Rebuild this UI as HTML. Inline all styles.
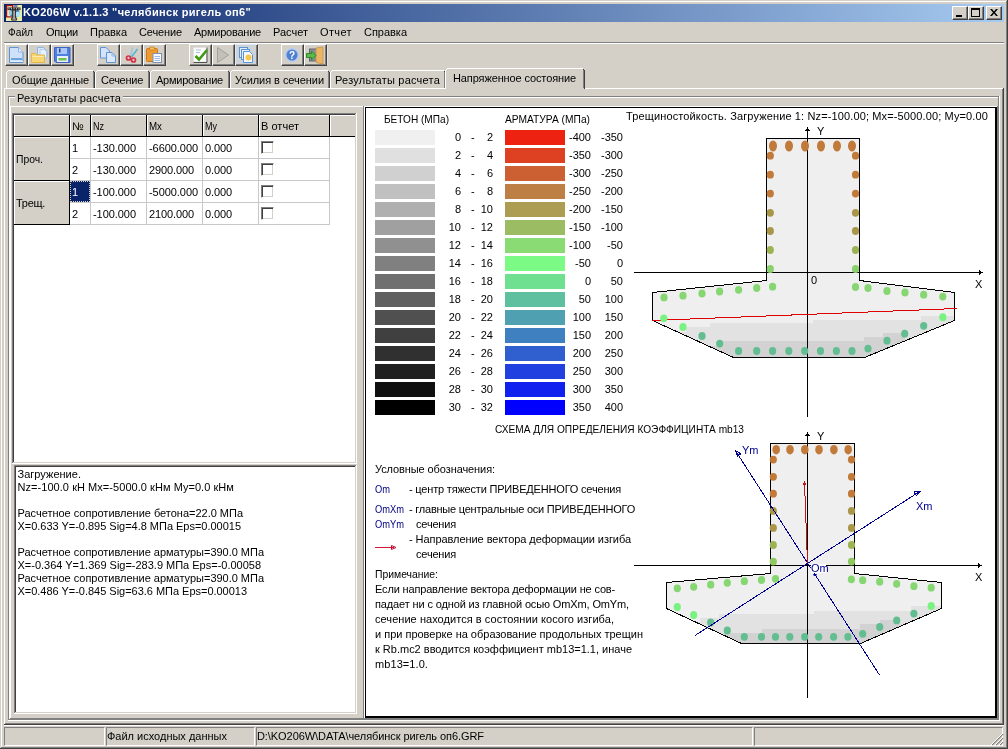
<!DOCTYPE html>
<html lang="ru"><head><meta charset="utf-8"><title>KO206W</title><style>
html,body{margin:0;padding:0}
body{width:1008px;height:749px;background:#D4D0C8;position:relative;overflow:hidden;will-change:transform;font-family:"Liberation Sans",sans-serif;font-size:11px;color:#000;line-height:13px}
.a{position:absolute}
.t{position:absolute;white-space:pre;line-height:13px;height:13px}
.h{position:absolute;height:1px}
.v{position:absolute;width:1px}
.btn{position:absolute;width:23px;height:22px;box-sizing:border-box;border:1px solid;border-color:#fff #404040 #404040 #fff;box-shadow:inset -1px -1px 0 #808080;background:#D4D0C8}
.cap{position:absolute;width:16px;height:14px;box-sizing:border-box;border:1px solid;border-color:#fff #404040 #404040 #fff;box-shadow:inset -1px -1px 0 #808080, inset 1px 1px 0 #D4D0C8;background:#D4D0C8}
.sb{position:absolute;top:727px;height:19px;box-sizing:border-box;border:1px solid;border-color:#808080 #fff #fff #808080}
.cb{position:absolute;width:13px;height:13px;box-sizing:border-box;border:1px solid;border-color:#808080 #fff #fff #808080;box-shadow:inset 1px 1px 0 #404040, inset -1px -1px 0 #D4D0C8;background:#fff}
</style></head><body>
<div class="a" style="left:0px;top:0px;width:1008px;height:749px;background:#D4D0C8;"></div>
<div class="h" style="left:0px;top:0px;width:1008px;background:#D4D0C8"></div>
<div class="v" style="left:0px;top:0px;height:749px;background:#D4D0C8"></div>
<div class="h" style="left:1px;top:1px;width:1006px;background:#fff"></div>
<div class="v" style="left:1px;top:1px;height:747px;background:#fff"></div>
<div class="h" style="left:0px;top:748px;width:1008px;background:#404040"></div>
<div class="v" style="left:1007px;top:0px;height:749px;background:#404040"></div>
<div class="h" style="left:1px;top:747px;width:1006px;background:#808080"></div>
<div class="v" style="left:1006px;top:1px;height:747px;background:#808080"></div>
<div class="a" style="left:4px;top:4px;width:1000px;height:18px;background:linear-gradient(90deg,#0A246A 0%,#A6CAF0 100%);"></div>
<svg class="a" style="left:6px;top:5px" width="16" height="16" viewBox="0 0 16 16"><rect width="16" height="16" fill="#E8EEA8"/><rect x=".6" y=".6" width="6" height="11.300" fill="#F4E2BC" stroke="#A01010" stroke-width="1.200"/><rect x="7.500" y="0" width="4" height="2.500" fill="#5A4AA8" opacity=".7"/><ellipse cx="8.500" cy="8" rx="5.200" ry="4.600" fill="#3C74BC"/><ellipse cx="11.800" cy="9.300" rx="2.300" ry="2.700" fill="#A8E6F6"/><ellipse cx="4.600" cy="8" rx="1.300" ry="2.400" fill="#90D8E4"/><rect x="1.500" y="2.500" width="13" height="2.600" fill="#2A2A2A"/><path d="M2.500 3.800h11" stroke="#fff" stroke-width=".9" stroke-dasharray="1 1.500"/><path d="M6.800 5h2.600v8.200h1.200v1.900h-5v-1.900h1.200z" fill="#B4B4B4" stroke="#2A1C10" stroke-width=".9"/></svg>
<span class="t" id="t0" style="left:23px;top:6px;color:#fff;font-weight:bold;letter-spacing:0.328px;">KO206W v.1.1.3 "челябинск ригель оп6"</span>
<div class="cap" style="left:952px;top:6px"></div>
<div class="cap" style="left:968px;top:6px"></div>
<div class="cap" style="left:986px;top:6px"></div>
<div class="a" style="left:956px;top:15px;width:6px;height:2px;background:#000;"></div>
<div class="a" style="left:971px;top:8px;width:9px;height:9px;box-sizing:border-box;border:1px solid #000;border-top-width:2px"></div>
<svg class="a" style="left:990px;top:9px" width="8" height="7" viewBox="0 0 8 7"><path d="M0 0h2l2 2.5L6 0h2L5 3.5 8 7H6L4 4.5 2 7H0l3-3.5z" fill="#000"/></svg>
<span class="t" id="t1" style="left:8px;top:26px;transform:scaleX(0.9243);transform-origin:0 0;">Файл</span>
<span class="t" id="t2" style="left:46px;top:26px;letter-spacing:-0.222px;">Опции</span>
<span class="t" id="t3" style="left:90px;top:26px;letter-spacing:-0.029px;">Правка</span>
<span class="t" id="t4" style="left:139px;top:26px;letter-spacing:-0.127px;">Сечение</span>
<span class="t" id="t5" style="left:194px;top:26px;letter-spacing:-0.234px;">Армирование</span>
<span class="t" id="t6" style="left:273px;top:26px;letter-spacing:0.0px;">Расчет</span>
<span class="t" id="t7" style="left:320px;top:26px;letter-spacing:0.375px;">Отчет</span>
<span class="t" id="t8" style="left:364px;top:26px;letter-spacing:-0.022px;">Справка</span>
<div class="h" style="left:4px;top:42px;width:1000px;background:#808080"></div>
<div class="h" style="left:4px;top:43px;width:1000px;background:#fff"></div>
<div class="btn" style="left:5px;top:44px"></div>
<div class="btn" style="left:28px;top:44px"></div>
<div class="btn" style="left:51px;top:44px"></div>
<div class="btn" style="left:97px;top:44px"></div>
<div class="btn" style="left:120px;top:44px"></div>
<div class="btn" style="left:143px;top:44px"></div>
<div class="btn" style="left:189px;top:44px"></div>
<div class="btn" style="left:212px;top:44px"></div>
<div class="btn" style="left:235px;top:44px"></div>
<div class="btn" style="left:281px;top:44px"></div>
<div class="btn" style="left:304px;top:44px"></div>
<svg class="a" style="left:5px;top:44px" width="23" height="22" viewBox="0 0 23 22"><path d="M4.5 3.5h9l4.5 4.5v10.500h-13.500z" fill="#CFE0FA" stroke="#5C95D6"/><path d="M13.500 3.500v4.500h4.500" fill="#E8F0FF" stroke="#8FB5E6"/><rect x="6" y="14" width="11" height="2" fill="#6FA3DC"/><rect x="5" y="17" width="13" height="1" fill="#E6F0FF"/></svg>
<svg class="a" style="left:28px;top:44px" width="23" height="22" viewBox="0 0 23 22"><path d="M9.500 3.500h6l3.500 3.500v7h-9.500z" fill="#DCE8FC" stroke="#8FB5E6"/><path d="M12 5.500h4.500l2 2v6.500h-6.500z" fill="#E8F0FF" stroke="#A8C4EC" stroke-width=".8"/><path d="M3.500 9.500h4l1 1.500h8v7.500h-13z" fill="#F7D774" stroke="#E2B84A"/><path d="M4.500 12.500h11" stroke="#FCEBAA"/></svg>
<svg class="a" style="left:51px;top:44px" width="23" height="22" viewBox="0 0 23 22"><path d="M3.500 3.500h15.500v15h-14l-1.500-1.500z" fill="#4F7FE0" stroke="#3C62C4"/><rect x="6" y="4" width="10" height="6" fill="#A9C6F4"/><rect x="8" y="4.500" width="1.500" height="4" fill="#28408C"/><rect x="6" y="12" width="11" height="6" fill="#E8F0FF"/><rect x="7.500" y="14" width="8" height="2.500" fill="#6CC24A"/></svg>
<svg class="a" style="left:97px;top:44px" width="23" height="22" viewBox="0 0 23 22"><path d="M3.500 3.500h5.500l3.500 3.500v7h-9z" fill="#D4E3FB" stroke="#5C95D6"/><path d="M9.500 8.500h5.500l3.500 3.500v6.500h-9z" fill="#DCE8FC" stroke="#5C95D6"/><path d="M15 8.500v3.500h3.500" fill="none" stroke="#8FB5E6"/></svg>
<svg class="a" style="left:120px;top:44px" width="23" height="22" viewBox="0 0 23 22"><path d="M12.500 3.500L10.500 13" stroke="#9CC8DC" stroke-width="1.600"/><path d="M17.500 5L11.500 13" stroke="#58B4D0" stroke-width="1.600"/><circle cx="8.500" cy="14" r="2" fill="none" stroke="#D83048" stroke-width="1.700"/><circle cx="13.500" cy="16" r="2" fill="none" stroke="#D83048" stroke-width="1.700"/></svg>
<svg class="a" style="left:143px;top:44px" width="23" height="22" viewBox="0 0 23 22"><rect x="3.500" y="4.500" width="11" height="13" rx="1" fill="#EE9A34" stroke="#C87818"/><rect x="6.500" y="3" width="5" height="3" rx="1" fill="#F8C060" stroke="#C87818" stroke-width=".8"/><rect x="10" y="9.500" width="8.500" height="9" fill="#F8FAFF" stroke="#8090A8"/><path d="M11.500 12.500h5.500M11.500 14.500h5.500M11.500 16.500h5.500" stroke="#8FB2E6" stroke-width=".9"/></svg>
<svg class="a" style="left:189px;top:44px" width="23" height="22" viewBox="0 0 23 22"><rect x="4.500" y="3.500" width="13" height="14.500" fill="#FDFDFD" stroke="#E0E0E0"/><path d="M4.500 18.500h13.500v-15" fill="none" stroke="#505050"/><path d="M7 6h5M7 8.500h4" stroke="#8FB0E0" stroke-width=".8"/><path d="M6.500 12l3.500 3.500l8-9.500" fill="none" stroke="#3F9A12" stroke-width="2.600"/></svg>
<svg class="a" style="left:212px;top:44px" width="23" height="22" viewBox="0 0 23 22"><path d="M5.500 3.500v15l11-7.500z" fill="#C2C0BA" stroke="#A4A29C"/></svg>
<svg class="a" style="left:235px;top:44px" width="23" height="22" viewBox="0 0 23 22"><rect x="0" y="0" width="21" height="20" fill="#C9D6E6" opacity=".55"/><rect x="4.500" y="3.500" width="8" height="10" fill="#E4EEFC" stroke="#5C95D6"/><rect x="6.500" y="5.500" width="8" height="10" fill="#E4EEFC" stroke="#5C95D6"/><path d="M8.500 7.500h6l3 3v8h-9z" fill="#F4F8FF" stroke="#5C95D6"/><circle cx="13.500" cy="13.500" r="3" fill="#F6C84A"/></svg>
<svg class="a" style="left:281px;top:44px" width="23" height="22" viewBox="0 0 23 22"><circle cx="11" cy="11" r="6.300" fill="#4F80D0" stroke="#B4CCF2" stroke-width="1.600"/><text x="11" y="14.800" text-anchor="middle" font-family="Liberation Sans, sans-serif" font-weight="bold" font-size="10" fill="#fff">?</text></svg>
<svg class="a" style="left:304px;top:44px" width="23" height="22" viewBox="0 0 23 22"><rect x="5.500" y="5" width="7" height="12" fill="#8C9098" stroke="#60646C"/><path d="M12 4l7-1v17l-7-1.500z" fill="#EBB567" stroke="#C89040" stroke-width=".8"/><path d="M2.500 9.500h5v-2.500l4.500 4.500l-4.500 4.500v-2.500h-5z" fill="#5CB84A" stroke="#2F8A24"/></svg>
<div class="v" style="left:74px;top:45px;height:20px;background:#E6E3DE"></div>
<div class="v" style="left:166px;top:45px;height:20px;background:#E6E3DE"></div>
<div class="v" style="left:258px;top:45px;height:20px;background:#E6E3DE"></div>
<div class="v" style="left:327px;top:45px;height:20px;background:#E6E3DE"></div>
<div class="h" style="left:8px;top:70px;width:85px;background:#fff"></div>
<div class="v" style="left:6px;top:72px;height:16px;background:#fff"></div>
<div class="a" style="left:7px;top:71px;width:1px;height:1px;background:#fff;"></div>
<div class="v" style="left:93px;top:72px;height:16px;background:#808080"></div>
<div class="v" style="left:94px;top:72px;height:16px;background:#404040"></div>
<div class="a" style="left:93px;top:71px;width:1px;height:1px;background:#404040;"></div>
<span class="t" id="t9" style="left:12px;top:74px;letter-spacing:-0.078px;">Общие данные</span>
<div class="h" style="left:97px;top:70px;width:51px;background:#fff"></div>
<div class="v" style="left:95px;top:72px;height:16px;background:#fff"></div>
<div class="a" style="left:96px;top:71px;width:1px;height:1px;background:#fff;"></div>
<div class="v" style="left:148px;top:72px;height:16px;background:#808080"></div>
<div class="v" style="left:149px;top:72px;height:16px;background:#404040"></div>
<div class="a" style="left:148px;top:71px;width:1px;height:1px;background:#404040;"></div>
<span class="t" id="t10" style="left:101px;top:74px;letter-spacing:-0.27px;">Сечение</span>
<div class="h" style="left:152px;top:70px;width:76px;background:#fff"></div>
<div class="v" style="left:150px;top:72px;height:16px;background:#fff"></div>
<div class="a" style="left:151px;top:71px;width:1px;height:1px;background:#fff;"></div>
<div class="v" style="left:228px;top:72px;height:16px;background:#808080"></div>
<div class="v" style="left:229px;top:72px;height:16px;background:#404040"></div>
<div class="a" style="left:228px;top:71px;width:1px;height:1px;background:#404040;"></div>
<span class="t" id="t11" style="left:156px;top:74px;letter-spacing:-0.234px;">Армирование</span>
<div class="h" style="left:232px;top:70px;width:96px;background:#fff"></div>
<div class="v" style="left:230px;top:72px;height:16px;background:#fff"></div>
<div class="a" style="left:231px;top:71px;width:1px;height:1px;background:#fff;"></div>
<div class="v" style="left:328px;top:72px;height:16px;background:#808080"></div>
<div class="v" style="left:329px;top:72px;height:16px;background:#404040"></div>
<div class="a" style="left:328px;top:71px;width:1px;height:1px;background:#404040;"></div>
<span class="t" id="t12" style="left:235px;top:74px;letter-spacing:-0.053px;">Усилия в сечении</span>
<div class="h" style="left:332px;top:70px;width:112px;background:#fff"></div>
<div class="v" style="left:330px;top:72px;height:16px;background:#fff"></div>
<div class="a" style="left:331px;top:71px;width:1px;height:1px;background:#fff;"></div>
<div class="v" style="left:444px;top:72px;height:16px;background:#808080"></div>
<div class="v" style="left:445px;top:72px;height:16px;background:#404040"></div>
<div class="a" style="left:444px;top:71px;width:1px;height:1px;background:#404040;"></div>
<span class="t" id="t13" style="left:335px;top:74px;letter-spacing:0.215px;">Результаты расчета</span>
<div class="h" style="left:4px;top:88px;width:1000px;background:#fff"></div>
<div class="v" style="left:4px;top:88px;height:636px;background:#fff"></div>
<div class="v" style="left:1003px;top:88px;height:637px;background:#404040"></div>
<div class="v" style="left:1002px;top:89px;height:635px;background:#808080"></div>
<div class="h" style="left:4px;top:724px;width:1000px;background:#404040"></div>
<div class="h" style="left:5px;top:723px;width:998px;background:#808080"></div>
<div class="h" style="left:4px;top:725px;width:1000px;background:#fff"></div>
<div class="a" style="left:445px;top:68px;width:140px;height:21px;background:#D4D0C8;"></div>
<div class="h" style="left:447px;top:68px;width:136px;background:#fff"></div>
<div class="v" style="left:445px;top:70px;height:19px;background:#fff"></div>
<div class="a" style="left:446px;top:69px;width:1px;height:1px;background:#fff;"></div>
<div class="v" style="left:583px;top:70px;height:18px;background:#808080"></div>
<div class="v" style="left:584px;top:70px;height:19px;background:#404040"></div>
<div class="a" style="left:583px;top:69px;width:1px;height:1px;background:#404040;"></div>
<span class="t" id="t14" style="left:453px;top:72px;letter-spacing:-0.117px;">Напряженное состояние</span>
<div class="h" style="left:8px;top:96px;width:991px;background:#808080"></div>
<div class="h" style="left:9px;top:97px;width:989px;background:#fff"></div>
<div class="v" style="left:8px;top:96px;height:624px;background:#808080"></div>
<div class="v" style="left:9px;top:97px;height:623px;background:#fff"></div>
<div class="v" style="left:998px;top:96px;height:624px;background:#808080"></div>
<div class="v" style="left:999px;top:96px;height:625px;background:#fff"></div>
<div class="h" style="left:8px;top:719px;width:991px;background:#808080"></div>
<div class="h" style="left:8px;top:720px;width:992px;background:#fff"></div>
<div class="a" style="left:15px;top:92px;width:108px;height:13px;background:#D4D0C8;"></div>
<span class="t" id="t15" style="left:17px;top:92px;letter-spacing:0.16px;">Результаты расчета</span>
<div class="h" style="left:10px;top:106px;width:353px;background:#fff"></div>
<div class="v" style="left:10px;top:106px;height:612px;background:#fff"></div>
<div class="v" style="left:363px;top:106px;height:613px;background:#808080"></div>
<div class="h" style="left:10px;top:718px;width:354px;background:#808080"></div>
<div class="a" style="left:14px;top:115px;width:341px;height:347px;background:#fff;"></div>
<div class="h" style="left:12px;top:113px;width:345px;background:#808080"></div>
<div class="v" style="left:12px;top:113px;height:351px;background:#808080"></div>
<div class="h" style="left:13px;top:114px;width:343px;background:#404040"></div>
<div class="v" style="left:13px;top:114px;height:349px;background:#404040"></div>
<div class="h" style="left:13px;top:462px;width:343px;background:#D4D0C8"></div>
<div class="v" style="left:355px;top:114px;height:349px;background:#D4D0C8"></div>
<div class="h" style="left:12px;top:463px;width:345px;background:#fff"></div>
<div class="v" style="left:356px;top:113px;height:351px;background:#fff"></div>
<div class="a" style="left:14px;top:115px;width:55px;height:21px;background:#D4D0C8;"></div>
<div class="h" style="left:14px;top:115px;width:55px;background:#fff"></div>
<div class="v" style="left:14px;top:115px;height:21px;background:#fff"></div>
<div class="h" style="left:14px;top:136px;width:56px;background:#000"></div>
<div class="v" style="left:69px;top:115px;height:22px;background:#000"></div>
<div class="a" style="left:70px;top:115px;width:20px;height:21px;background:#D4D0C8;"></div>
<div class="h" style="left:70px;top:115px;width:20px;background:#fff"></div>
<div class="v" style="left:70px;top:115px;height:21px;background:#fff"></div>
<div class="h" style="left:70px;top:136px;width:21px;background:#000"></div>
<div class="v" style="left:90px;top:115px;height:22px;background:#000"></div>
<div class="a" style="left:91px;top:115px;width:55px;height:21px;background:#D4D0C8;"></div>
<div class="h" style="left:91px;top:115px;width:55px;background:#fff"></div>
<div class="v" style="left:91px;top:115px;height:21px;background:#fff"></div>
<div class="h" style="left:91px;top:136px;width:56px;background:#000"></div>
<div class="v" style="left:146px;top:115px;height:22px;background:#000"></div>
<div class="a" style="left:147px;top:115px;width:55px;height:21px;background:#D4D0C8;"></div>
<div class="h" style="left:147px;top:115px;width:55px;background:#fff"></div>
<div class="v" style="left:147px;top:115px;height:21px;background:#fff"></div>
<div class="h" style="left:147px;top:136px;width:56px;background:#000"></div>
<div class="v" style="left:202px;top:115px;height:22px;background:#000"></div>
<div class="a" style="left:203px;top:115px;width:55px;height:21px;background:#D4D0C8;"></div>
<div class="h" style="left:203px;top:115px;width:55px;background:#fff"></div>
<div class="v" style="left:203px;top:115px;height:21px;background:#fff"></div>
<div class="h" style="left:203px;top:136px;width:56px;background:#000"></div>
<div class="v" style="left:258px;top:115px;height:22px;background:#000"></div>
<div class="a" style="left:259px;top:115px;width:70px;height:21px;background:#D4D0C8;"></div>
<div class="h" style="left:259px;top:115px;width:70px;background:#fff"></div>
<div class="v" style="left:259px;top:115px;height:21px;background:#fff"></div>
<div class="h" style="left:259px;top:136px;width:71px;background:#000"></div>
<div class="v" style="left:329px;top:115px;height:22px;background:#000"></div>
<div class="a" style="left:330px;top:115px;width:25px;height:21px;background:#D4D0C8;"></div>
<div class="h" style="left:330px;top:115px;width:25px;background:#fff"></div>
<div class="v" style="left:330px;top:115px;height:21px;background:#fff"></div>
<div class="h" style="left:330px;top:136px;width:26px;background:#000"></div>
<div class="v" style="left:355px;top:115px;height:22px;background:#000"></div>
<div class="v" style="left:355px;top:115px;height:22px;background:#D4D0C8"></div>
<div class="a" style="left:14px;top:137px;width:55px;height:43px;background:#D4D0C8;"></div>
<div class="h" style="left:14px;top:137px;width:55px;background:#fff"></div>
<div class="v" style="left:14px;top:137px;height:43px;background:#fff"></div>
<div class="h" style="left:14px;top:180px;width:56px;background:#000"></div>
<div class="v" style="left:69px;top:137px;height:44px;background:#000"></div>
<div class="a" style="left:14px;top:181px;width:55px;height:43px;background:#D4D0C8;"></div>
<div class="h" style="left:14px;top:181px;width:55px;background:#fff"></div>
<div class="v" style="left:14px;top:181px;height:43px;background:#fff"></div>
<div class="h" style="left:14px;top:224px;width:56px;background:#000"></div>
<div class="v" style="left:69px;top:181px;height:44px;background:#000"></div>
<div class="h" style="left:70px;top:158px;width:260px;background:#C8C8C8"></div>
<div class="h" style="left:70px;top:180px;width:260px;background:#C8C8C8"></div>
<div class="h" style="left:70px;top:202px;width:260px;background:#C8C8C8"></div>
<div class="h" style="left:70px;top:224px;width:260px;background:#C8C8C8"></div>
<div class="v" style="left:90px;top:137px;height:88px;background:#C8C8C8"></div>
<div class="v" style="left:146px;top:137px;height:88px;background:#C8C8C8"></div>
<div class="v" style="left:202px;top:137px;height:88px;background:#C8C8C8"></div>
<div class="v" style="left:258px;top:137px;height:88px;background:#C8C8C8"></div>
<div class="v" style="left:329px;top:137px;height:88px;background:#C8C8C8"></div>
<span class="t" id="t16" style="left:72px;top:120px;letter-spacing:0.188px;">№</span>
<span class="t" id="t17" style="left:93px;top:120px;transform:scaleX(0.8177);transform-origin:0 0;">Nz</span>
<span class="t" id="t18" style="left:149px;top:120px;transform:scaleX(0.886);transform-origin:0 0;">Mx</span>
<span class="t" id="t19" style="left:205px;top:120px;transform:scaleX(0.8179);transform-origin:0 0;">My</span>
<span class="t" id="t20" style="left:261px;top:120px;letter-spacing:0.022px;">В отчет</span>
<span class="t" id="t21" style="left:16px;top:153px;transform:scaleX(0.9412);transform-origin:0 0;">Проч.</span>
<span class="t" id="t22" style="left:16px;top:197px;letter-spacing:-0.291px;">Трещ.</span>
<span class="t" id="t23" style="left:72px;top:142px;">1</span>
<span class="t" id="t24" style="left:93px;top:142px;letter-spacing:-0.055px;">-130.000</span>
<span class="t" id="t25" style="left:149px;top:142px;letter-spacing:-0.061px;">-6600.000</span>
<span class="t" id="t26" style="left:205px;top:142px;letter-spacing:-0.106px;">0.000</span>
<div class="cb" style="left:261px;top:141px"></div>
<span class="t" id="t27" style="left:72px;top:164px;">2</span>
<span class="t" id="t28" style="left:93px;top:164px;letter-spacing:-0.055px;">-130.000</span>
<span class="t" id="t29" style="left:149px;top:164px;letter-spacing:-0.111px;">2900.000</span>
<span class="t" id="t30" style="left:205px;top:164px;letter-spacing:-0.106px;">0.000</span>
<div class="cb" style="left:261px;top:163px"></div>
<div class="a" style="left:70px;top:181px;width:20px;height:21px;background:#0A246A;outline:1px dotted #D4D0C8;outline-offset:-1px;"></div>
<span class="t" id="t31" style="left:72px;top:186px;color:#fff;">1</span>
<span class="t" id="t32" style="left:93px;top:186px;letter-spacing:-0.055px;">-100.000</span>
<span class="t" id="t33" style="left:149px;top:186px;letter-spacing:-0.061px;">-5000.000</span>
<span class="t" id="t34" style="left:205px;top:186px;letter-spacing:-0.106px;">0.000</span>
<div class="cb" style="left:261px;top:185px"></div>
<span class="t" id="t35" style="left:72px;top:208px;">2</span>
<span class="t" id="t36" style="left:93px;top:208px;letter-spacing:-0.055px;">-100.000</span>
<span class="t" id="t37" style="left:149px;top:208px;letter-spacing:-0.111px;">2100.000</span>
<span class="t" id="t38" style="left:205px;top:208px;letter-spacing:-0.106px;">0.000</span>
<div class="cb" style="left:261px;top:207px"></div>
<div class="a" style="left:16px;top:467px;width:339px;height:245px;background:#fff;"></div>
<div class="h" style="left:14px;top:465px;width:343px;background:#808080"></div>
<div class="v" style="left:14px;top:465px;height:249px;background:#808080"></div>
<div class="h" style="left:15px;top:466px;width:341px;background:#404040"></div>
<div class="v" style="left:15px;top:466px;height:247px;background:#404040"></div>
<div class="h" style="left:15px;top:712px;width:341px;background:#D4D0C8"></div>
<div class="v" style="left:355px;top:466px;height:247px;background:#D4D0C8"></div>
<div class="h" style="left:14px;top:713px;width:343px;background:#fff"></div>
<div class="v" style="left:356px;top:465px;height:249px;background:#fff"></div>
<span class="t" id="t39" style="left:17.5px;top:468px;letter-spacing:0.021px;">Загружение.</span>
<span class="t" id="t40" style="left:17.5px;top:481px;letter-spacing:0.052px;">Nz=-100.0 кН Mx=-5000.0 кНм My=0.0 кНм</span>
<span class="t" id="t41" style="left:17.5px;top:507px;letter-spacing:-0.012px;">Расчетное сопротивление бетона=22.0 МПа</span>
<span class="t" id="t42" style="left:17.5px;top:520px;letter-spacing:-0.018px;">X=0.633 Y=-0.895 Sig=4.8 МПа Eps=0.00015</span>
<span class="t" id="t43" style="left:17.5px;top:546px;letter-spacing:-0.016px;">Расчетное сопротивление арматуры=390.0 МПа</span>
<span class="t" id="t44" style="left:17.5px;top:559px;letter-spacing:-0.006px;">X=-0.364 Y=1.369 Sig=-283.9 МПа Eps=-0.00058</span>
<span class="t" id="t45" style="left:17.5px;top:572px;letter-spacing:-0.016px;">Расчетное сопротивление арматуры=390.0 МПа</span>
<span class="t" id="t46" style="left:17.5px;top:585px;letter-spacing:-0.02px;">X=0.486 Y=-0.845 Sig=63.6 МПа Eps=0.00013</span>
<div class="a" style="left:366px;top:108px;width:629px;height:608px;background:#fff;"></div>
<div class="h" style="left:364px;top:106px;width:633px;background:#fff"></div>
<div class="v" style="left:364px;top:106px;height:612px;background:#fff"></div>
<div class="v" style="left:997px;top:106px;height:613px;background:#808080"></div>
<div class="h" style="left:364px;top:718px;width:634px;background:#808080"></div>
<div class="h" style="left:365px;top:107px;width:632px;background:#000"></div>
<div class="v" style="left:365px;top:107px;height:611px;background:#000"></div>
<div class="h" style="left:365px;top:716px;width:632px;background:#000"></div>
<div class="h" style="left:365px;top:717px;width:632px;background:#000"></div>
<div class="v" style="left:995px;top:107px;height:611px;background:#000"></div>
<div class="v" style="left:996px;top:107px;height:611px;background:#000"></div>
<span class="t" id="t47" style="left:384px;top:113px;transform:scaleX(0.9173);transform-origin:0 0;">БЕТОН (МПа)</span>
<span class="t" id="t48" style="left:505px;top:113px;transform:scaleX(0.9299);transform-origin:0 0;">АРМАТУРА (МПа)</span>
<div class="a" style="left:375px;top:130px;width:60px;height:15px;background:rgb(240,240,240);"></div>
<div class="a" style="left:505px;top:130px;width:60px;height:15px;background:rgb(238,34,17);"></div>
<span class="t" style="left:421px;top:131px;width:40px;text-align:right;">0</span>
<span class="t" id="t49" style="left:471px;top:131px;">-</span>
<span class="t" style="left:453px;top:131px;width:40px;text-align:right;">2</span>
<span class="t" style="left:551px;top:131px;width:40px;text-align:right;">-400</span>
<span class="t" style="left:583px;top:131px;width:40px;text-align:right;">-350</span>
<div class="a" style="left:375px;top:148px;width:60px;height:15px;background:rgb(224,224,224);"></div>
<div class="a" style="left:505px;top:148px;width:60px;height:15px;background:rgb(222,65,34);"></div>
<span class="t" style="left:421px;top:149px;width:40px;text-align:right;">2</span>
<span class="t" id="t50" style="left:471px;top:149px;">-</span>
<span class="t" style="left:453px;top:149px;width:40px;text-align:right;">4</span>
<span class="t" style="left:551px;top:149px;width:40px;text-align:right;">-350</span>
<span class="t" style="left:583px;top:149px;width:40px;text-align:right;">-300</span>
<div class="a" style="left:375px;top:166px;width:60px;height:15px;background:rgb(208,208,208);"></div>
<div class="a" style="left:505px;top:166px;width:60px;height:15px;background:rgb(205,96,50);"></div>
<span class="t" style="left:421px;top:167px;width:40px;text-align:right;">4</span>
<span class="t" id="t51" style="left:471px;top:167px;">-</span>
<span class="t" style="left:453px;top:167px;width:40px;text-align:right;">6</span>
<span class="t" style="left:551px;top:167px;width:40px;text-align:right;">-300</span>
<span class="t" style="left:583px;top:167px;width:40px;text-align:right;">-250</span>
<div class="a" style="left:375px;top:184px;width:60px;height:15px;background:rgb(192,192,192);"></div>
<div class="a" style="left:505px;top:184px;width:60px;height:15px;background:rgb(189,127,67);"></div>
<span class="t" style="left:421px;top:185px;width:40px;text-align:right;">6</span>
<span class="t" id="t52" style="left:471px;top:185px;">-</span>
<span class="t" style="left:453px;top:185px;width:40px;text-align:right;">8</span>
<span class="t" style="left:551px;top:185px;width:40px;text-align:right;">-250</span>
<span class="t" style="left:583px;top:185px;width:40px;text-align:right;">-200</span>
<div class="a" style="left:375px;top:202px;width:60px;height:15px;background:rgb(176,176,176);"></div>
<div class="a" style="left:505px;top:202px;width:60px;height:15px;background:rgb(172,157,83);"></div>
<span class="t" style="left:421px;top:203px;width:40px;text-align:right;">8</span>
<span class="t" id="t53" style="left:471px;top:203px;">-</span>
<span class="t" style="left:453px;top:203px;width:40px;text-align:right;">10</span>
<span class="t" style="left:551px;top:203px;width:40px;text-align:right;">-200</span>
<span class="t" style="left:583px;top:203px;width:40px;text-align:right;">-150</span>
<div class="a" style="left:375px;top:220px;width:60px;height:15px;background:rgb(160,160,160);"></div>
<div class="a" style="left:505px;top:220px;width:60px;height:15px;background:rgb(156,188,100);"></div>
<span class="t" style="left:421px;top:221px;width:40px;text-align:right;">10</span>
<span class="t" id="t54" style="left:471px;top:221px;">-</span>
<span class="t" style="left:453px;top:221px;width:40px;text-align:right;">12</span>
<span class="t" style="left:551px;top:221px;width:40px;text-align:right;">-150</span>
<span class="t" style="left:583px;top:221px;width:40px;text-align:right;">-100</span>
<div class="a" style="left:375px;top:238px;width:60px;height:15px;background:rgb(144,144,144);"></div>
<div class="a" style="left:505px;top:238px;width:60px;height:15px;background:rgb(139,219,116);"></div>
<span class="t" style="left:421px;top:239px;width:40px;text-align:right;">12</span>
<span class="t" id="t55" style="left:471px;top:239px;">-</span>
<span class="t" style="left:453px;top:239px;width:40px;text-align:right;">14</span>
<span class="t" style="left:551px;top:239px;width:40px;text-align:right;">-100</span>
<span class="t" style="left:583px;top:239px;width:40px;text-align:right;">-50</span>
<div class="a" style="left:375px;top:256px;width:60px;height:15px;background:rgb(128,128,128);"></div>
<div class="a" style="left:505px;top:256px;width:60px;height:15px;background:rgb(123,250,133);"></div>
<span class="t" style="left:421px;top:257px;width:40px;text-align:right;">14</span>
<span class="t" id="t56" style="left:471px;top:257px;">-</span>
<span class="t" style="left:453px;top:257px;width:40px;text-align:right;">16</span>
<span class="t" style="left:551px;top:257px;width:40px;text-align:right;">-50</span>
<span class="t" style="left:583px;top:257px;width:40px;text-align:right;">0</span>
<div class="a" style="left:375px;top:274px;width:60px;height:15px;background:rgb(112,112,112);"></div>
<div class="a" style="left:505px;top:274px;width:60px;height:15px;background:rgb(111,224,144);"></div>
<span class="t" style="left:421px;top:275px;width:40px;text-align:right;">16</span>
<span class="t" id="t57" style="left:471px;top:275px;">-</span>
<span class="t" style="left:453px;top:275px;width:40px;text-align:right;">18</span>
<span class="t" style="left:551px;top:275px;width:40px;text-align:right;">0</span>
<span class="t" style="left:583px;top:275px;width:40px;text-align:right;">50</span>
<div class="a" style="left:375px;top:292px;width:60px;height:15px;background:rgb(96,96,96);"></div>
<div class="a" style="left:505px;top:292px;width:60px;height:15px;background:rgb(95,192,160);"></div>
<span class="t" style="left:421px;top:293px;width:40px;text-align:right;">18</span>
<span class="t" id="t58" style="left:471px;top:293px;">-</span>
<span class="t" style="left:453px;top:293px;width:40px;text-align:right;">20</span>
<span class="t" style="left:551px;top:293px;width:40px;text-align:right;">50</span>
<span class="t" style="left:583px;top:293px;width:40px;text-align:right;">100</span>
<div class="a" style="left:375px;top:310px;width:60px;height:15px;background:rgb(80,80,80);"></div>
<div class="a" style="left:505px;top:310px;width:60px;height:15px;background:rgb(79,160,176);"></div>
<span class="t" style="left:421px;top:311px;width:40px;text-align:right;">20</span>
<span class="t" id="t59" style="left:471px;top:311px;">-</span>
<span class="t" style="left:453px;top:311px;width:40px;text-align:right;">22</span>
<span class="t" style="left:551px;top:311px;width:40px;text-align:right;">100</span>
<span class="t" style="left:583px;top:311px;width:40px;text-align:right;">150</span>
<div class="a" style="left:375px;top:328px;width:60px;height:15px;background:rgb(64,64,64);"></div>
<div class="a" style="left:505px;top:328px;width:60px;height:15px;background:rgb(63,128,192);"></div>
<span class="t" style="left:421px;top:329px;width:40px;text-align:right;">22</span>
<span class="t" id="t60" style="left:471px;top:329px;">-</span>
<span class="t" style="left:453px;top:329px;width:40px;text-align:right;">24</span>
<span class="t" style="left:551px;top:329px;width:40px;text-align:right;">150</span>
<span class="t" style="left:583px;top:329px;width:40px;text-align:right;">200</span>
<div class="a" style="left:375px;top:346px;width:60px;height:15px;background:rgb(48,48,48);"></div>
<div class="a" style="left:505px;top:346px;width:60px;height:15px;background:rgb(48,96,207);"></div>
<span class="t" style="left:421px;top:347px;width:40px;text-align:right;">24</span>
<span class="t" id="t61" style="left:471px;top:347px;">-</span>
<span class="t" style="left:453px;top:347px;width:40px;text-align:right;">26</span>
<span class="t" style="left:551px;top:347px;width:40px;text-align:right;">200</span>
<span class="t" style="left:583px;top:347px;width:40px;text-align:right;">250</span>
<div class="a" style="left:375px;top:364px;width:60px;height:15px;background:rgb(32,32,32);"></div>
<div class="a" style="left:505px;top:364px;width:60px;height:15px;background:rgb(32,64,223);"></div>
<span class="t" style="left:421px;top:365px;width:40px;text-align:right;">26</span>
<span class="t" id="t62" style="left:471px;top:365px;">-</span>
<span class="t" style="left:453px;top:365px;width:40px;text-align:right;">28</span>
<span class="t" style="left:551px;top:365px;width:40px;text-align:right;">250</span>
<span class="t" style="left:583px;top:365px;width:40px;text-align:right;">300</span>
<div class="a" style="left:375px;top:382px;width:60px;height:15px;background:rgb(16,16,16);"></div>
<div class="a" style="left:505px;top:382px;width:60px;height:15px;background:rgb(16,32,239);"></div>
<span class="t" style="left:421px;top:383px;width:40px;text-align:right;">28</span>
<span class="t" id="t63" style="left:471px;top:383px;">-</span>
<span class="t" style="left:453px;top:383px;width:40px;text-align:right;">30</span>
<span class="t" style="left:551px;top:383px;width:40px;text-align:right;">300</span>
<span class="t" style="left:583px;top:383px;width:40px;text-align:right;">350</span>
<div class="a" style="left:375px;top:400px;width:60px;height:15px;background:rgb(0,0,0);"></div>
<div class="a" style="left:505px;top:400px;width:60px;height:15px;background:rgb(0,0,255);"></div>
<span class="t" style="left:421px;top:401px;width:40px;text-align:right;">30</span>
<span class="t" id="t64" style="left:471px;top:401px;">-</span>
<span class="t" style="left:453px;top:401px;width:40px;text-align:right;">32</span>
<span class="t" style="left:551px;top:401px;width:40px;text-align:right;">350</span>
<span class="t" style="left:583px;top:401px;width:40px;text-align:right;">400</span>
<span class="t" id="t65" style="left:626px;top:110px;letter-spacing:0.129px;">Трещиностойкость. Загружение 1: Nz=-100.00; Mx=-5000.00; My=0.00</span>
<span class="t" id="t66" style="left:495px;top:423px;transform:scaleX(0.9216);transform-origin:0 0;">СХЕМА ДЛЯ ОПРЕДЕЛЕНИЯ КОЭФФИЦИНТА mb13</span>
<span class="t" id="t67" style="left:375px;top:463px;letter-spacing:-0.091px;">Условные обозначения:</span>
<span class="t" id="t68" style="left:375px;top:483px;color:#000080;transform:scaleX(0.8458);transform-origin:0 0;">Om</span>
<span class="t" id="t69" style="left:409px;top:483px;letter-spacing:-0.189px;">- центр тяжести ПРИВЕДЕННОГО сечения</span>
<span class="t" id="t70" style="left:375px;top:503px;color:#000080;transform:scaleX(0.8471);transform-origin:0 0;">OmXm</span>
<span class="t" id="t71" style="left:409px;top:503px;letter-spacing:-0.23px;">- главные центральные оси ПРИВЕДЕННОГО</span>
<span class="t" id="t72" style="left:375px;top:518px;color:#000080;transform:scaleX(0.8471);transform-origin:0 0;">OmYm</span>
<span class="t" id="t73" style="left:416px;top:518px;letter-spacing:-0.183px;">сечения</span>
<span class="t" id="t74" style="left:409px;top:533px;letter-spacing:-0.058px;">- Направление вектора деформации изгиба</span>
<span class="t" id="t75" style="left:416px;top:548px;letter-spacing:-0.183px;">сечения</span>
<svg class="a" style="left:374px;top:543px" width="24" height="9" viewBox="0 0 24 9"><path d="M1 4.500H20" stroke="#D41434" stroke-width="1"/><path d="M17.500 2.500L22 4.500L17.500 6.500z" fill="none" stroke="#C01030" stroke-width="1"/></svg>
<span class="t" id="t76" style="left:375px;top:568px;transform:scaleX(0.944);transform-origin:0 0;">Примечание:</span>
<span class="t" id="t77" style="left:375px;top:583px;letter-spacing:-0.162px;">Если направление вектора деформации не сов-</span>
<span class="t" id="t78" style="left:375px;top:598px;letter-spacing:-0.134px;">падает ни с одной из главной осью OmXm, OmYm,</span>
<span class="t" id="t79" style="left:375px;top:613px;letter-spacing:0.05px;">сечение находится в состоянии косого изгиба,</span>
<span class="t" id="t80" style="left:375px;top:628px;letter-spacing:-0.006px;">и при проверке на образование продольных трещин</span>
<span class="t" id="t81" style="left:375px;top:643px;letter-spacing:-0.004px;">к Rb.mc2 вводится коэффициент mb13=1.1, иначе</span>
<span class="t" id="t82" style="left:375px;top:658px;letter-spacing:0.078px;">mb13=1.0.</span>
<svg class="a" style="left:365px;top:108px" width="630" height="608" viewBox="365 108 630 608" font-family="Liberation Sans, sans-serif" font-size="11" shape-rendering="crispEdges">
<defs><clipPath id="c1"><polygon points="766.5,138.5 859.5,138.5 859.5,280.5 954.5,292.5 954.5,320.5 864.5,357.5 733.5,357.5 652.5,320.5 652.5,292.5 766.5,280.5"/></clipPath><clipPath id="c2"><polygon points="770.5,443.5 854.5,443.5 854.5,573.5 941.5,582.5 941.5,608.5 860.5,643.5 741.5,643.5 666.5,608.5 666.5,582.5 770.5,573.5"/></clipPath></defs>
<polygon points="766.5,138.5 859.5,138.5 859.5,280.5 954.5,292.5 954.5,320.5 864.5,357.5 733.5,357.5 652.5,320.5 652.5,292.5 766.5,280.5" fill="#EFEFEF"/>

<g clip-path="url(#c1)"><polygon points="640,332 686,332 686,327 710,327 710,323 813,323 813,320 921,320 921,316 960,316 960,360 640,360" fill="#E2E2E2"/><polygon points="700,346 723,346 723,341 864,341 864,337 883,337 883,333 905,333 905,360 700,360" fill="#D2D2D2"/></g>
<polygon points="766.5,138.5 859.5,138.5 859.5,280.5 954.5,292.5 954.5,320.5 864.5,357.5 733.5,357.5 652.5,320.5 652.5,292.5 766.5,280.5" fill="none" stroke="#000" stroke-width="1"/>
<path d="M633.5 272.5H982M807.5 128V417" stroke="#000" stroke-width="1" fill="none"/>
<path d="M807.5 127l-2.500 4h5z M983 272.500l-4 -2.500v5z" fill="#000"/>
<path d="M652 320.5L957 308.5" stroke="#e00000" stroke-width="1"/>
<text x="817" y="135">Y</text><text x="975" y="288">X</text><text x="811" y="284">0</text>
<ellipse cx="773" cy="146" rx="4" ry="5.5" fill="#C17A3A" shape-rendering="auto"/>
<ellipse cx="789" cy="146" rx="4" ry="5.5" fill="#C17A3A" shape-rendering="auto"/>
<ellipse cx="805" cy="146" rx="4" ry="5.5" fill="#C17A3A" shape-rendering="auto"/>
<ellipse cx="821" cy="146" rx="4" ry="5.5" fill="#C17A3A" shape-rendering="auto"/>
<ellipse cx="837" cy="146" rx="4" ry="5.5" fill="#C17A3A" shape-rendering="auto"/>
<ellipse cx="852" cy="146" rx="4" ry="5.5" fill="#C17A3A" shape-rendering="auto"/>
<ellipse cx="770.3" cy="155.7" rx="3.6" ry="3.9" fill="#C17A3A" shape-rendering="auto"/>
<ellipse cx="855.5" cy="155.7" rx="3.6" ry="3.9" fill="#C17A3A" shape-rendering="auto"/>
<ellipse cx="770.3" cy="174.7" rx="3.6" ry="3.9" fill="#C17A3A" shape-rendering="auto"/>
<ellipse cx="855.5" cy="174.7" rx="3.6" ry="3.9" fill="#C17A3A" shape-rendering="auto"/>
<ellipse cx="770.3" cy="193.6" rx="3.6" ry="3.9" fill="#C17A3A" shape-rendering="auto"/>
<ellipse cx="855.5" cy="193.6" rx="3.6" ry="3.9" fill="#C17A3A" shape-rendering="auto"/>
<ellipse cx="770.3" cy="212.8" rx="3.6" ry="3.9" fill="#AA9648" shape-rendering="auto"/>
<ellipse cx="855.5" cy="212.8" rx="3.6" ry="3.9" fill="#AA9648" shape-rendering="auto"/>
<ellipse cx="770.3" cy="231" rx="3.6" ry="3.9" fill="#AA9648" shape-rendering="auto"/>
<ellipse cx="855.5" cy="231" rx="3.6" ry="3.9" fill="#AA9648" shape-rendering="auto"/>
<ellipse cx="770.3" cy="250" rx="3.6" ry="3.9" fill="#9DB455" shape-rendering="auto"/>
<ellipse cx="855.5" cy="250" rx="3.6" ry="3.9" fill="#9DB455" shape-rendering="auto"/>
<ellipse cx="770.3" cy="269" rx="3.6" ry="3.9" fill="#8AD06C" shape-rendering="auto"/>
<ellipse cx="855.5" cy="269" rx="3.6" ry="3.9" fill="#8AD06C" shape-rendering="auto"/>
<ellipse cx="664" cy="297.4" rx="3.6" ry="3.9" fill="#86D672" shape-rendering="auto"/>
<ellipse cx="683" cy="295.7" rx="3.6" ry="3.9" fill="#86D672" shape-rendering="auto"/>
<ellipse cx="702" cy="293.5" rx="3.6" ry="3.9" fill="#86D672" shape-rendering="auto"/>
<ellipse cx="719.6" cy="291.5" rx="3.6" ry="3.9" fill="#86D672" shape-rendering="auto"/>
<ellipse cx="738.6" cy="289.8" rx="3.6" ry="3.9" fill="#86D672" shape-rendering="auto"/>
<ellipse cx="756.7" cy="288" rx="3.6" ry="3.9" fill="#86D672" shape-rendering="auto"/>
<ellipse cx="772.6" cy="286.7" rx="3.6" ry="3.9" fill="#86D672" shape-rendering="auto"/>
<ellipse cx="855.5" cy="287" rx="3.6" ry="3.9" fill="#86D672" shape-rendering="auto"/>
<ellipse cx="868" cy="288" rx="3.6" ry="3.9" fill="#86D672" shape-rendering="auto"/>
<ellipse cx="887" cy="291" rx="3.6" ry="3.9" fill="#86D672" shape-rendering="auto"/>
<ellipse cx="905" cy="292.5" rx="3.6" ry="3.9" fill="#86D672" shape-rendering="auto"/>
<ellipse cx="923.7" cy="294.7" rx="3.6" ry="3.9" fill="#86D672" shape-rendering="auto"/>
<ellipse cx="942.8" cy="296.6" rx="3.6" ry="3.9" fill="#86D672" shape-rendering="auto"/>
<ellipse cx="663.8" cy="318.3" rx="3.6" ry="3.9" fill="#7AF282" shape-rendering="auto"/>
<ellipse cx="683" cy="327" rx="3.6" ry="3.9" fill="#7AF282" shape-rendering="auto"/>
<ellipse cx="702" cy="336" rx="3.6" ry="3.9" fill="#62BE90" shape-rendering="auto"/>
<ellipse cx="719.7" cy="343.6" rx="3.6" ry="3.9" fill="#62BE90" shape-rendering="auto"/>
<ellipse cx="738.6" cy="351" rx="3.6" ry="3.9" fill="#62BE90" shape-rendering="auto"/>
<ellipse cx="756.7" cy="351" rx="3.6" ry="3.9" fill="#62BE90" shape-rendering="auto"/>
<ellipse cx="772.6" cy="351" rx="3.6" ry="3.9" fill="#62BE90" shape-rendering="auto"/>
<ellipse cx="788.8" cy="351" rx="3.6" ry="3.9" fill="#62BE90" shape-rendering="auto"/>
<ellipse cx="804.7" cy="351" rx="3.6" ry="3.9" fill="#62BE90" shape-rendering="auto"/>
<ellipse cx="820.5" cy="351" rx="3.6" ry="3.9" fill="#62BE90" shape-rendering="auto"/>
<ellipse cx="836.4" cy="351" rx="3.6" ry="3.9" fill="#62BE90" shape-rendering="auto"/>
<ellipse cx="852" cy="351" rx="3.6" ry="3.9" fill="#62BE90" shape-rendering="auto"/>
<ellipse cx="942.8" cy="317.2" rx="3.6" ry="3.9" fill="#7AF282" shape-rendering="auto"/>
<ellipse cx="923.7" cy="325.8" rx="3.6" ry="3.9" fill="#62BE90" shape-rendering="auto"/>
<ellipse cx="904.7" cy="333.7" rx="3.6" ry="3.9" fill="#62BE90" shape-rendering="auto"/>
<ellipse cx="887" cy="340.7" rx="3.6" ry="3.9" fill="#62BE90" shape-rendering="auto"/>
<ellipse cx="868" cy="348.6" rx="3.6" ry="3.9" fill="#62BE90" shape-rendering="auto"/>
<polygon points="770.5,443.5 854.5,443.5 854.5,573.5 941.5,582.5 941.5,608.5 860.5,643.5 741.5,643.5 666.5,608.5 666.5,582.5 770.5,573.5" fill="#EFEFEF"/>
<g clip-path="url(#c2)"><polygon points="650,622 700,622 700,618 719,618 719,614 814,614 814,611 911,611 911,606 950,606 950,650 650,650" fill="#E2E2E2"/><polygon points="700,637 723,637 723,633 762,633 762,629 860,629 860,624 880,624 880,620 900,620 900,650 700,650" fill="#D2D2D2"/></g>
<polygon points="770.5,443.5 854.5,443.5 854.5,573.5 941.5,582.5 941.5,608.5 860.5,643.5 741.5,643.5 666.5,608.5 666.5,582.5 770.5,573.5" fill="none" stroke="#000" stroke-width="1"/>
<path d="M633.5 565.5H981M807.5 434V698" stroke="#000" stroke-width="1" fill="none"/>
<path d="M807.5 432l-2.500 4h5z M982 565.500l-4 -2.500v5z" fill="#000"/>
<text x="817" y="440">Y</text><text x="975" y="581">X</text>
<ellipse cx="776.2" cy="449.7" rx="3.8" ry="4.8" fill="#C17A3A" shape-rendering="auto"/>
<ellipse cx="790" cy="449.7" rx="3.8" ry="4.8" fill="#C17A3A" shape-rendering="auto"/>
<ellipse cx="804.8" cy="449.7" rx="3.8" ry="4.8" fill="#C17A3A" shape-rendering="auto"/>
<ellipse cx="819" cy="449.7" rx="3.8" ry="4.8" fill="#C17A3A" shape-rendering="auto"/>
<ellipse cx="833.9" cy="449.7" rx="3.8" ry="4.8" fill="#C17A3A" shape-rendering="auto"/>
<ellipse cx="848.2" cy="449.7" rx="3.8" ry="4.8" fill="#C17A3A" shape-rendering="auto"/>
<ellipse cx="773.3" cy="459.6" rx="3.6" ry="3.9" fill="#C17A3A" shape-rendering="auto"/>
<ellipse cx="851.5" cy="459.6" rx="3.6" ry="3.9" fill="#C17A3A" shape-rendering="auto"/>
<ellipse cx="773.3" cy="476.8" rx="3.6" ry="3.9" fill="#C17A3A" shape-rendering="auto"/>
<ellipse cx="851.5" cy="476.8" rx="3.6" ry="3.9" fill="#C17A3A" shape-rendering="auto"/>
<ellipse cx="773.3" cy="493.7" rx="3.6" ry="3.9" fill="#C17A3A" shape-rendering="auto"/>
<ellipse cx="851.5" cy="493.7" rx="3.6" ry="3.9" fill="#C17A3A" shape-rendering="auto"/>
<ellipse cx="773.3" cy="510.9" rx="3.6" ry="3.9" fill="#AA9648" shape-rendering="auto"/>
<ellipse cx="851.5" cy="510.9" rx="3.6" ry="3.9" fill="#AA9648" shape-rendering="auto"/>
<ellipse cx="773.3" cy="527.9" rx="3.6" ry="3.9" fill="#AA9648" shape-rendering="auto"/>
<ellipse cx="851.5" cy="527.9" rx="3.6" ry="3.9" fill="#AA9648" shape-rendering="auto"/>
<ellipse cx="773.3" cy="545" rx="3.6" ry="3.9" fill="#9DB455" shape-rendering="auto"/>
<ellipse cx="851.5" cy="545" rx="3.6" ry="3.9" fill="#9DB455" shape-rendering="auto"/>
<ellipse cx="773.3" cy="561.6" rx="3.6" ry="3.9" fill="#90C860" shape-rendering="auto"/>
<ellipse cx="851.5" cy="561.6" rx="3.6" ry="3.9" fill="#90C860" shape-rendering="auto"/>
<ellipse cx="677.3" cy="588.3" rx="3.6" ry="3.9" fill="#86D672" shape-rendering="auto"/>
<ellipse cx="693.7" cy="586.8" rx="3.6" ry="3.9" fill="#86D672" shape-rendering="auto"/>
<ellipse cx="710.7" cy="584.7" rx="3.6" ry="3.9" fill="#86D672" shape-rendering="auto"/>
<ellipse cx="727.3" cy="582.8" rx="3.6" ry="3.9" fill="#86D672" shape-rendering="auto"/>
<ellipse cx="744.3" cy="581.2" rx="3.6" ry="3.9" fill="#86D672" shape-rendering="auto"/>
<ellipse cx="761.5" cy="580" rx="3.6" ry="3.9" fill="#86D672" shape-rendering="auto"/>
<ellipse cx="775.5" cy="578.8" rx="3.6" ry="3.9" fill="#86D672" shape-rendering="auto"/>
<ellipse cx="851.4" cy="579.3" rx="3.6" ry="3.9" fill="#86D672" shape-rendering="auto"/>
<ellipse cx="862.7" cy="580.2" rx="3.6" ry="3.9" fill="#86D672" shape-rendering="auto"/>
<ellipse cx="879.7" cy="581.7" rx="3.6" ry="3.9" fill="#86D672" shape-rendering="auto"/>
<ellipse cx="896.7" cy="583.8" rx="3.6" ry="3.9" fill="#86D672" shape-rendering="auto"/>
<ellipse cx="913.9" cy="586.2" rx="3.6" ry="3.9" fill="#86D672" shape-rendering="auto"/>
<ellipse cx="931.2" cy="587.7" rx="3.6" ry="3.9" fill="#86D672" shape-rendering="auto"/>
<ellipse cx="677.3" cy="607" rx="3.6" ry="3.9" fill="#7AF282" shape-rendering="auto"/>
<ellipse cx="693.7" cy="615" rx="3.6" ry="3.9" fill="#7AF282" shape-rendering="auto"/>
<ellipse cx="710.7" cy="622.5" rx="3.6" ry="3.9" fill="#62BE90" shape-rendering="auto"/>
<ellipse cx="727.3" cy="630.5" rx="3.6" ry="3.9" fill="#62BE90" shape-rendering="auto"/>
<ellipse cx="744.3" cy="636.8" rx="3.6" ry="3.9" fill="#62BE90" shape-rendering="auto"/>
<ellipse cx="761.5" cy="636.8" rx="3.6" ry="3.9" fill="#62BE90" shape-rendering="auto"/>
<ellipse cx="775.5" cy="636.8" rx="3.6" ry="3.9" fill="#62BE90" shape-rendering="auto"/>
<ellipse cx="789.8" cy="636.8" rx="3.6" ry="3.9" fill="#62BE90" shape-rendering="auto"/>
<ellipse cx="804.7" cy="636.8" rx="3.6" ry="3.9" fill="#62BE90" shape-rendering="auto"/>
<ellipse cx="818.7" cy="636.8" rx="3.6" ry="3.9" fill="#62BE90" shape-rendering="auto"/>
<ellipse cx="833.6" cy="636.8" rx="3.6" ry="3.9" fill="#62BE90" shape-rendering="auto"/>
<ellipse cx="847.9" cy="636.8" rx="3.6" ry="3.9" fill="#62BE90" shape-rendering="auto"/>
<ellipse cx="862.7" cy="633.8" rx="3.6" ry="3.9" fill="#62BE90" shape-rendering="auto"/>
<ellipse cx="879.7" cy="627" rx="3.6" ry="3.9" fill="#62BE90" shape-rendering="auto"/>
<ellipse cx="896.7" cy="620.4" rx="3.6" ry="3.9" fill="#62BE90" shape-rendering="auto"/>
<ellipse cx="913.9" cy="613.6" rx="3.6" ry="3.9" fill="#62BE90" shape-rendering="auto"/>
<ellipse cx="931.2" cy="606" rx="3.6" ry="3.9" fill="#7AF282" shape-rendering="auto"/>
<path d="M736 451.5L879.5 675M919 492L695 635.5" stroke="#000090" stroke-width="1" fill="none"/>
<path d="M735.5 450.5l5.5 3.5l-3.5 2z M920 491.5l-6 0.5l2.5 3.5z" fill="none" stroke="#000090" stroke-width="1"/>
<path d="M807.500 563L804.500 482" stroke="#C41414" stroke-width="1"/><path d="M804.500 480.500l-2 4.500h4z" fill="#C41414"/>
<rect x="811" y="564" width="15" height="9" fill="#fff"/><path d="M813 574.500q2 2.500 4 0" fill="none" stroke="#0000A0" stroke-width="1" shape-rendering="auto"/>
<g fill="#000090"><text x="742" y="454">Ym</text><text x="916" y="510">Xm</text><text x="811" y="572">Om</text></g>
</svg>
<div class="sb" style="left:4px;width:101px"></div>
<div class="sb" style="left:106px;width:149px"></div>
<div class="sb" style="left:256px;width:497px"></div>
<div class="sb" style="left:754px;width:249px"></div>
<span class="t" id="t83" style="left:107px;top:730px;letter-spacing:-0.002px;">Файл исходных данных</span>
<span class="t" id="t84" style="left:257px;top:730px;letter-spacing:-0.07px;">D:\KO206W\DATA\челябинск ригель оп6.GRF</span>
<svg class="a" style="left:991px;top:733px" width="13" height="13" viewBox="0 0 13 13"><path d="M12 1L1 12M12 5L5 12M12 9L9 12" stroke="#808080" stroke-width="1.2"/><path d="M12 0L0 12M12 4L4 12M12 8L8 12" stroke="#fff" stroke-width="1"/></svg>
</body></html>
